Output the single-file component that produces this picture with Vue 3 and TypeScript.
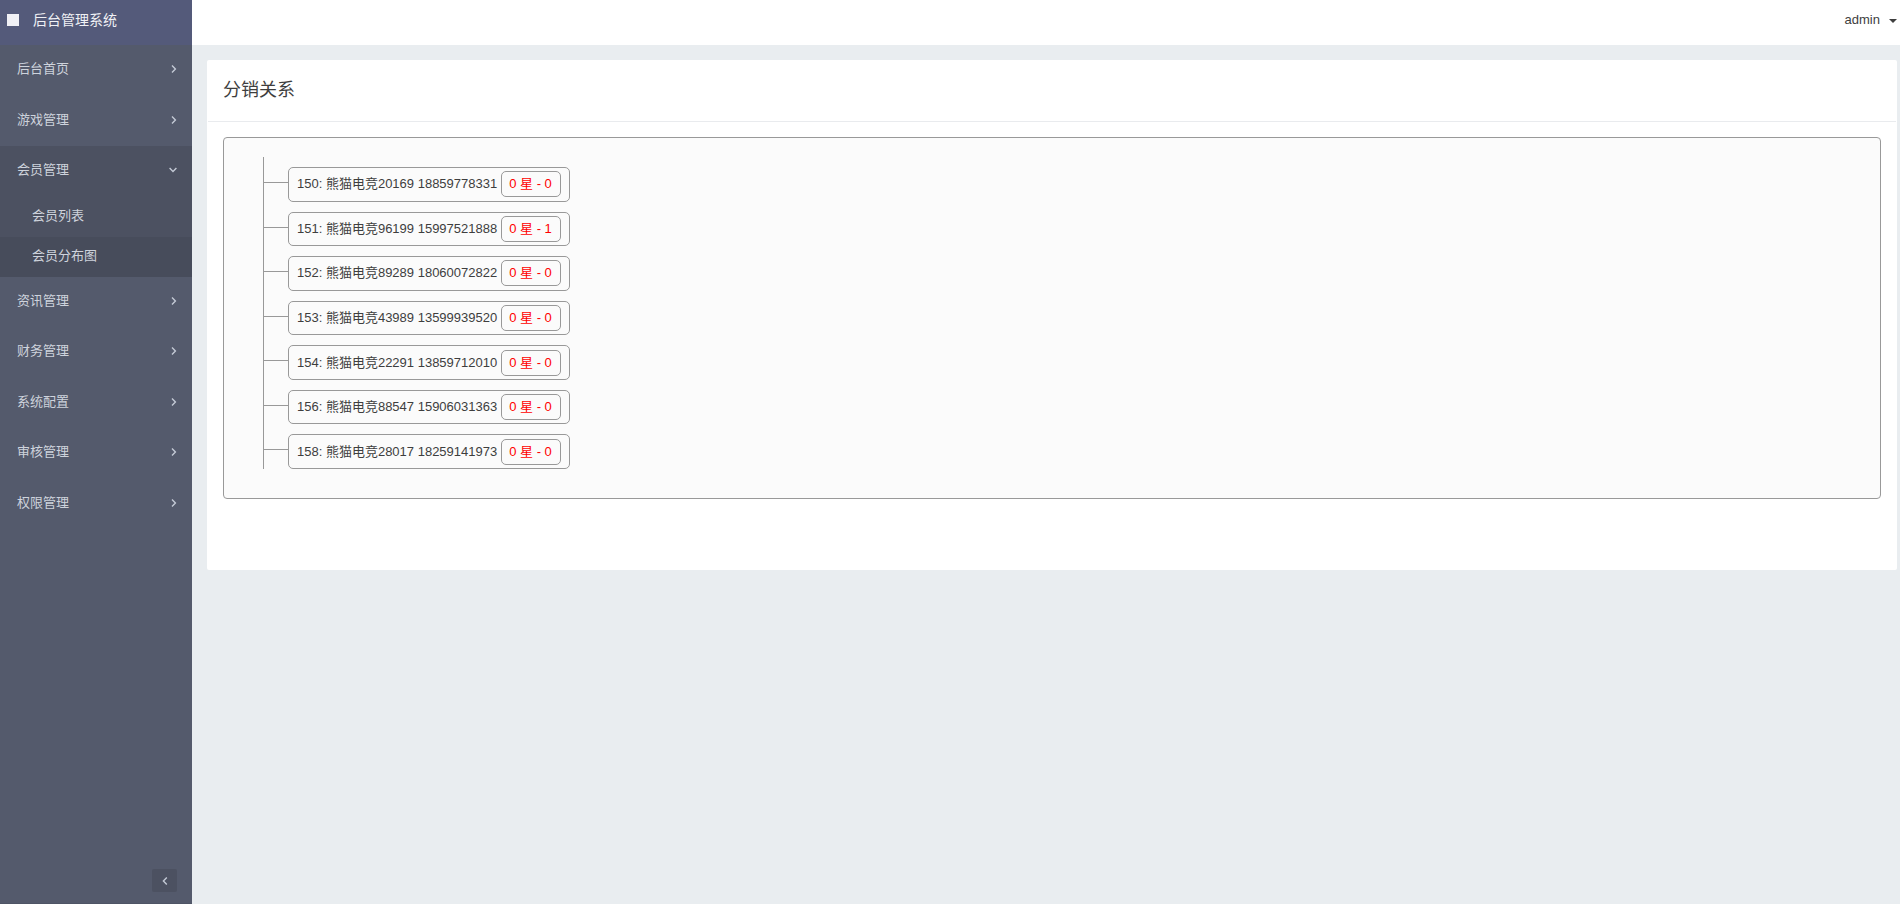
<script setup lang="ts">
import { ref } from 'vue'

interface MenuItem {
  label: string
  children?: string[]
}

interface Member {
  id: number
  name: string
  phone: string
  stars: number
  count: number
}

const menu: MenuItem[] = [
  { label: '后台首页' },
  { label: '游戏管理' },
  { label: '会员管理', children: ['会员列表', '会员分布图'] },
  { label: '资讯管理' },
  { label: '财务管理' },
  { label: '系统配置' },
  { label: '审核管理' },
  { label: '权限管理' },
]

const openLabel = ref('会员管理')
const activeChild = ref('会员分布图')

const members: Member[] = [
  { id: 150, name: '熊猫电竞20169', phone: '18859778331', stars: 0, count: 0 },
  { id: 151, name: '熊猫电竞96199', phone: '15997521888', stars: 0, count: 1 },
  { id: 152, name: '熊猫电竞89289', phone: '18060072822', stars: 0, count: 0 },
  { id: 153, name: '熊猫电竞43989', phone: '13599939520', stars: 0, count: 0 },
  { id: 154, name: '熊猫电竞22291', phone: '13859712010', stars: 0, count: 0 },
  { id: 156, name: '熊猫电竞88547', phone: '15906031363', stars: 0, count: 0 },
  { id: 158, name: '熊猫电竞28017', phone: '18259141973', stars: 0, count: 0 },
]
</script>

<template>
  <div class="layout">
    <aside class="sidebar">
      <a class="brand" href="#"><span class="brand-mark"></span>后台管理系统</a>
      <nav>
        <ul class="menu">
          <li v-for="item in menu" :key="item.label" :class="{ open: item.label === openLabel }">
            <a class="menu-link" href="#" @click.prevent="openLabel = item.label">
              <span>{{ item.label }}</span>
              <svg v-if="item.label === openLabel" width="8" height="8" viewBox="0 0 8 8" aria-hidden="true">
                <path d="M0.6 2 L4 5.4 L7.4 2" />
              </svg>
              <svg v-else width="6" height="8" viewBox="0 0 6 8" aria-hidden="true">
                <path d="M1 0.6 L4.4 4 L1 7.4" />
              </svg>
            </a>
            <ul v-if="item.children && item.label === openLabel" class="submenu">
              <li v-for="child in item.children" :key="child">
                <a
                  class="submenu-link"
                  :class="{ active: child === activeChild }"
                  href="#"
                  @click.prevent="activeChild = child"
                >{{ child }}</a>
              </li>
            </ul>
          </li>
        </ul>
      </nav>
      <footer class="sidebar-foot">
        <button class="collapse" type="button" aria-label="收起菜单">
          <svg width="6" height="8" viewBox="0 0 6 8" aria-hidden="true">
            <path d="M4.8 0.6 L1.4 4 L4.8 7.4" />
          </svg>
        </button>
      </footer>
    </aside>

    <div class="page">
      <header class="topbar">
        <button class="user" type="button">admin<span class="caret"></span></button>
      </header>
      <main class="content">
        <section class="card">
          <h1 class="card-title">分销关系</h1>
          <div class="card-body">
            <div class="tree">
              <ul class="tree-list">
                <li v-for="m in members" :key="m.id">
                  <a class="node" href="#" @click.prevent>
                    <span>{{ m.id }}: {{ m.name }} {{ m.phone }}</span>
                    <span class="badge">{{ m.stars }} 星 - {{ m.count }}</span>
                  </a>
                </li>
              </ul>
            </div>
          </div>
        </section>
      </main>
    </div>
  </div>
</template>

<style>
body {
  margin: 0;
  background: #e9edf0;
}
</style>

<style scoped>
.layout {
  display: flex;
  min-height: 100vh;
  color: #3e3e3e;
  font: 13px/18px "Liberation Sans", "Noto Sans CJK SC", sans-serif;
}
.layout * {
  box-sizing: border-box;
}
ul {
  margin: 0;
  padding: 0;
  list-style: none;
}
a {
  color: inherit;
  text-decoration: none;
}
button {
  border: 0;
  background: none;
  color: inherit;
  font: inherit;
  cursor: pointer;
}
svg {
  display: block;
  fill: none;
  stroke: #c4cad6;
  stroke-width: 1.4;
}

.sidebar {
  display: flex;
  flex: none;
  flex-direction: column;
  width: 192px;
  background: #545a6c;
  color: #ced3dc;
}
.brand {
  display: flex;
  align-items: center;
  gap: 14px;
  height: 45px;
  padding: 0 7px 5px;
  background: #545a7a;
  color: #f0f1f5;
  font-size: 14px;
}
.brand-mark {
  width: 12px;
  height: 12px;
  background: #f0f0f5;
}
.menu {
  display: flex;
  flex-direction: column;
  min-height: 484px;
}
.menu > li {
  display: flex;
  flex: 1 1 auto;
  flex-direction: column;
}
.menu > .open {
  background: #4c5161;
}
.menu-link {
  display: flex;
  flex: 1 1 auto;
  align-items: center;
  justify-content: space-between;
  min-height: 50px;
  padding: 0 15px 2px 17px;
}
.submenu-link {
  display: flex;
  align-items: center;
  height: 40px;
  padding: 0 15px 2px 32px;
}
.submenu-link.active {
  background: #474c5b;
}
.sidebar-foot {
  display: flex;
  justify-content: flex-end;
  margin-top: auto;
  padding: 0 15px 11px;
  border-bottom: 1px solid #4e5465;
}
.collapse {
  display: flex;
  align-items: center;
  justify-content: center;
  width: 25px;
  height: 23px;
  padding: 0;
  border-radius: 2px;
  background: #4c5161;
}

.page {
  flex: 1;
  min-width: 0;
}
.topbar {
  display: flex;
  justify-content: flex-end;
  height: 45px;
  padding: 0 3px 6px 0;
  background: #fff;
}
.user {
  display: flex;
  align-items: center;
  gap: 9px;
  padding: 0;
}
.caret {
  margin-top: 3px;
  border: 4px solid transparent;
  border-top-color: #3e3e3e;
  border-bottom: 0;
}
.content {
  padding: 15px 3px 15px 15px;
}
.card {
  padding: 0 1px;
  border-radius: 2px;
  background: #fff;
}
.card-title {
  margin: 0;
  padding: 18px 15px;
  border-bottom: 1px solid #e9ebee;
  font-size: 18px;
  font-weight: 400;
  line-height: 25px;
}
.card-body {
  padding: 15px 15px 71px;
}
.tree {
  padding: 19px 19px 29px 39px;
  border: 1px solid #999;
  border-radius: 4px;
  background: #fbfbfb;
}
.tree-list {
  display: grid;
  grid-auto-rows: 1fr;
  min-height: 312px;
  border-left: 1px solid #999;
}
.tree-list li {
  display: flex;
  padding-top: 10px;
}
.tree-list li::before {
  width: 24px;
  height: 1px;
  margin-top: 15px;
  background: #999;
  content: "";
}
.node {
  display: flex;
  align-items: center;
  gap: 4px;
  padding: 0 8px;
  border: 1px solid #999;
  border-radius: 5px;
}
.badge {
  padding: 3px 8px 3px 7px;
  border: 1px solid #999;
  border-radius: 5px;
  color: #f00;
}
</style>
